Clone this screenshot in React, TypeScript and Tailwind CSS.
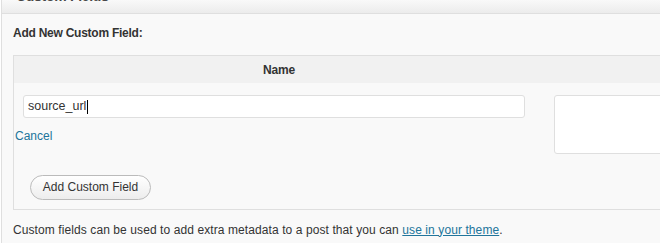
export default function App() {
  return (
    <div className="h-[243px] w-[660px] overflow-hidden bg-white font-['Liberation_Sans',Arial,sans-serif] text-[#333]">
      <div className="ml-px h-full border-l border-[#dfdfdf] bg-[#f9f9f9]">
        {/* clipped box title */}
        <div className="h-[14px] overflow-hidden border-b border-[#dfdfdf] bg-gradient-to-b from-[#f9f9f9] to-[#ececec]">
          <h3 className="-mt-[12px] pl-[14px] text-[14px] font-bold leading-[16px] tracking-[-0.3px] text-[#464646]">
            Custom Fields
          </h3>
        </div>

        <div className="pl-[11px]">
          <p className="pt-[12px] text-[12px] font-bold leading-[14px] tracking-[-0.25px] text-[#333]">
            Add New Custom Field:
          </p>

          <div className="mt-[15px] w-[720px] border border-[#dfdfdf] bg-[#f9f9f9]">
            <div className="flex h-[27px] items-center border-b border-[#f1f1f1] bg-[#f1f1f1]">
              <div className="w-[530px] pt-px text-center text-[12px] font-bold tracking-[-0.2px] text-[#333]">
                Name
              </div>
              <div className="flex-1" />
            </div>
            <div className="flex pt-[12px]">
              <div className="w-[540px]">
                <div className="pl-[9px]">
                  <div className="flex h-[23px] w-[502px] items-center rounded-[3px] border border-[#dfdfdf] bg-white px-[4px] text-[12.5px] text-[#333]">
                    source_url
                    <span className="ml-px inline-block h-[14px] w-px bg-black" />
                  </div>
                </div>
                <a href="#" className="mt-[11px] block pl-px text-[12px] leading-[14px] text-[#21759b]">
                  Cancel
                </a>
                <div className="pb-[9px] pl-[16px] pt-[31px]">
                  <button
                    type="button"
                    className="h-[25px] w-[121px] rounded-full border border-[#bbb] bg-gradient-to-b from-white to-[#ededed] text-[12px] text-[#333]"
                  >
                    Add Custom Field
                  </button>
                </div>
              </div>
              <div>
                <div className="h-[59px] w-[160px] rounded-[3px] border border-[#dfdfdf] bg-white" />
              </div>
            </div>
          </div>

          <p className="pt-[13px] text-[12px] leading-[14px] tracking-[0.09px] text-[#333]">
            Custom fields can be used to add extra metadata to a post that you can{" "}
            <a href="#" className="text-[#21759b] underline">
              use in your theme
            </a>
            .
          </p>
        </div>
      </div>
    </div>
  );
}
